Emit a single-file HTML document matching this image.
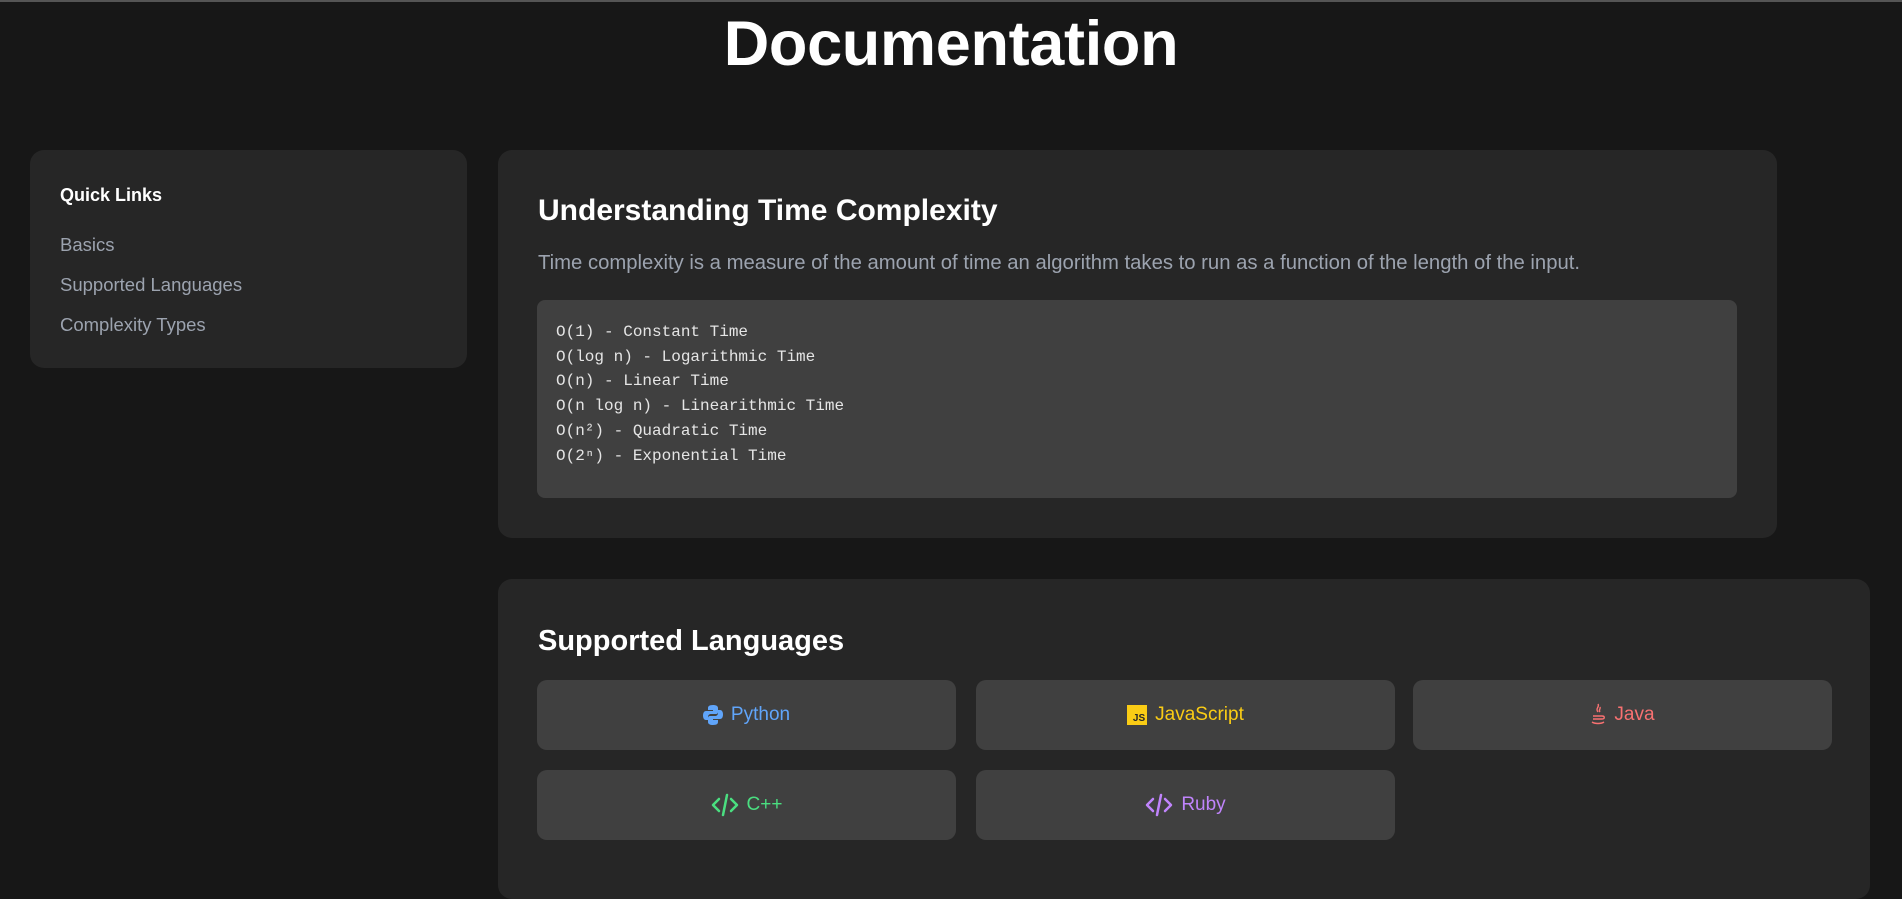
<!DOCTYPE html>
<html><head><meta charset="utf-8"><style>
*{box-sizing:border-box;margin:0;padding:0}
body{width:1902px;height:871px;overflow:hidden;background:#171717;font-family:"Liberation Sans",sans-serif;color:#fff;border-top:2px solid #555;position:relative}
h1{position:absolute;top:6px;left:0;width:1902px;text-align:center;font-size:63px;font-weight:bold;letter-spacing:-0.3px}
.side{position:absolute;left:30px;top:148px;width:437px;height:218px;background:#262626;border-radius:14px;padding:0 30px}
.side h3{position:absolute;top:35px;left:30px;font-size:18px;font-weight:bold}
.side a{position:absolute;left:30px;font-size:18.5px;color:#9ca3af;text-decoration:none}
.card{position:absolute;background:#262626;border-radius:14px}
.card h2{position:absolute;left:40px;font-size:29px;font-weight:bold}
p{position:absolute;left:40px;top:102px;font-size:20.3px;color:#9ca3af}
.code{position:absolute;left:39px;top:150px;width:1200px;height:198px;background:#404040;border-radius:8px;padding:20px 19px;font-family:"Liberation Mono",monospace;font-size:16px;line-height:24.7px;color:#e5e5e5;white-space:pre}
.btn{position:absolute;width:419px;height:70px;background:#404040;border-radius:10px;display:flex;align-items:center;justify-content:center;font-size:19px;gap:8px}
</style></head><body>
<h1>Documentation</h1>
<div class="side"><h3>Quick Links</h3>
<a style="top:84px">Basics</a><a style="top:124px">Supported Languages</a><a style="top:164px">Complexity Types</a></div>
<div class="card" style="left:498px;top:148px;width:1279px;height:388px">
<h2 style="top:44px;font-size:30px">Understanding Time Complexity</h2>
<p>Time complexity is a measure of the amount of time an algorithm takes to run as a function of the length of the input.</p>
<div class="code">O(1) - Constant Time
O(log n) - Logarithmic Time
O(n) - Linear Time
O(n log n) - Linearithmic Time
O(n²) - Quadratic Time
O(2ⁿ) - Exponential Time</div>
</div>
<div class="card" style="left:498px;top:577px;width:1372px;height:320px">
<h2 style="top:46px">Supported Languages</h2>
<div class="btn" style="left:39px;top:101px;color:#60a5fa"><svg width="20" height="22" viewBox="0 0 20 22"><path d="M10 1c-4 0-5 1.5-5 3v2h5v1H3c-2 0-3 2-3 4.5S1 16 3 16h2v-3c0-2 1.5-3 3-3h5c1.5 0 2-1 2-2V4c0-2-2-3-5-3z" fill="#60a5fa"/><path d="M10 21c4 0 5-1.5 5-3v-2h-5v-1h7c2 0 3-2 3-4.5S19 6 17 6h-2v3c0 2-1.5 3-3 3H7c-1.5 0-2 1-2 2v4c0 2 2 3 5 3z" fill="#60a5fa"/></svg>Python</div>
<div class="btn" style="left:478px;top:101px;color:#facc15"><span style="display:inline-block;width:20px;height:20px;background:#facc15;color:#262626;font-size:10px;font-weight:bold;text-align:right;line-height:28px;padding-right:2px">JS</span>JavaScript</div>
<div class="btn" style="left:915px;top:101px;color:#f87171"><svg width="16" height="24" viewBox="0 0 16 24"><path d="M8 1c2 3-3 4 0 8M10 4c1 2-2 3 0 5M3 13h9M3 16h9M2 19c3 2 9 2 12 0M12 13c3 0 3 3 0 3" stroke="#f87171" stroke-width="1.4" fill="none"/></svg>Java</div>
<div class="btn" style="left:39px;top:191px;color:#4ade80"><svg width="28" height="24" viewBox="0 0 28 24"><path d="M8 6L2 12l6 6M20 6l6 6-6 6M16 2l-4 20" stroke="#4ade80" stroke-width="2.5" fill="none" stroke-linecap="round" stroke-linejoin="round"/></svg>C++</div>
<div class="btn" style="left:478px;top:191px;color:#c084fc"><svg width="28" height="24" viewBox="0 0 28 24"><path d="M8 6L2 12l6 6M20 6l6 6-6 6M16 2l-4 20" stroke="#c084fc" stroke-width="2.5" fill="none" stroke-linecap="round" stroke-linejoin="round"/></svg>Ruby</div>
</div>
</body></html>
